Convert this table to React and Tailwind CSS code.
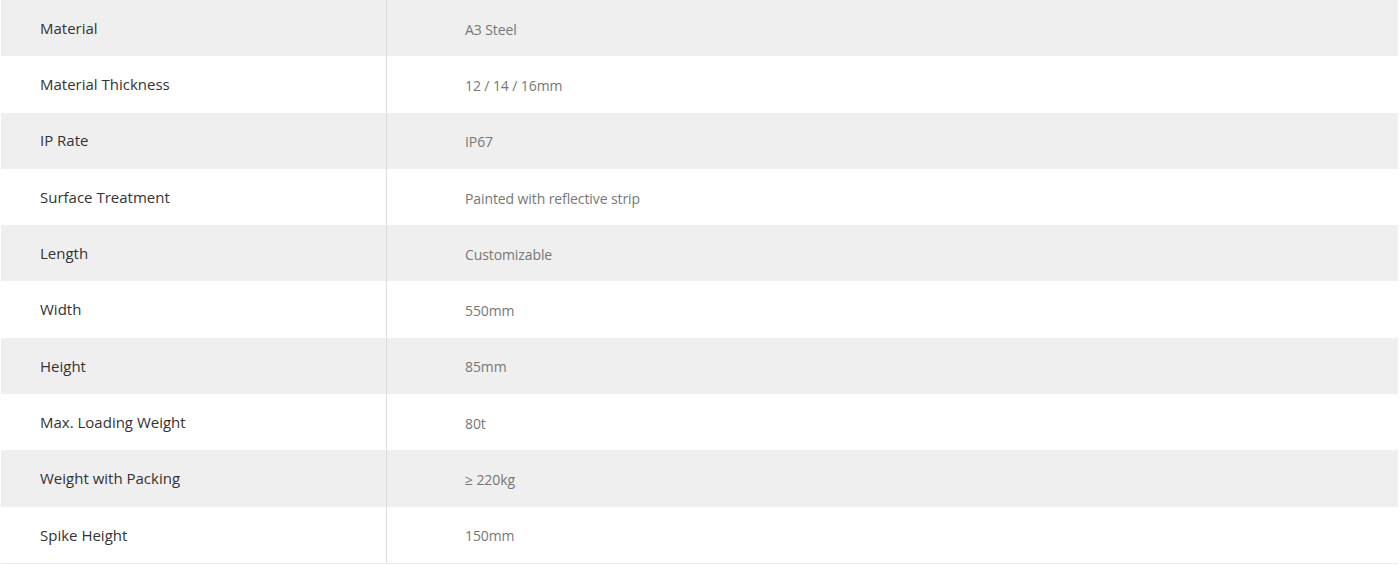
import React from 'react';

const specs = [
    ['Material', 'A3 Steel'],
    ['Material Thickness', '12 / 14 / 16mm'],
    ['IP Rate', 'IP67'],
    ['Surface Treatment', 'Painted with reflective strip'],
    ['Length', 'Customizable'],
    ['Width', '550mm'],
    ['Height', '85mm'],
    ['Max. Loading Weight', '80t'],
    ['Weight with Packing', '≥ 220kg'],
    ['Spike Height', '150mm'],
];

const App = () => {
    return (
        <div className="w-[1400px] h-[565px] bg-white overflow-hidden" style={{ fontFamily: '"Open Sans", "Liberation Sans", sans-serif' }}>
            <div className="ml-px w-[1397px] h-[564px] flex flex-col border-b border-[#ececec]">
                {specs.map(([label, value], i) => (
                    <div key={label} className={`flex-1 flex items-stretch ${i % 2 === 0 ? 'bg-[#efefef]' : 'bg-white'}`}>
                        <div className="w-[386px] shrink-0 flex items-center pl-[39px] border-r border-[#dddddd] text-[15px] text-[#333333]">
                            {label}
                        </div>
                        <div className="flex-1 flex items-center pl-[78px] pt-[2px] text-[14px] text-[#777777] tracking-[-0.1px]">
                            {value}
                        </div>
                    </div>
                ))}
            </div>
        </div>
    );
};

export default App;
